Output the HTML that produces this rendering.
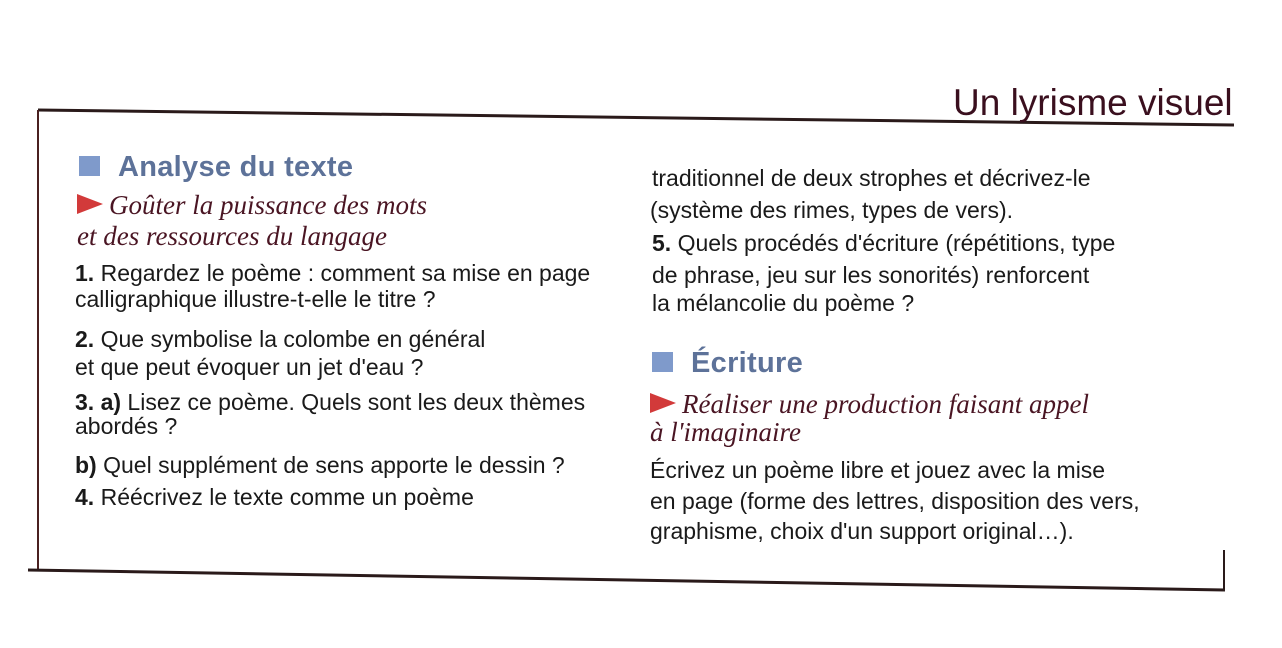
<!DOCTYPE html>
<html><head><meta charset="utf-8"><style>
body{margin:0;width:1282px;height:648px;background:#fff;position:relative;overflow:hidden;font-family:"Liberation Sans",sans-serif;color:#1a1a1a}
.l{position:absolute;white-space:nowrap;font-size:23px;line-height:26px}
.h{font-size:29px;color:#5d7299;font-weight:bold;letter-spacing:0.3px}
.sq{display:inline-block;width:21px;height:20px;background:#7f9acb;margin-right:18px;vertical-align:0}
.s{font-family:"Liberation Serif",serif;font-style:italic;font-size:27px;color:#4a1523}
.tri{display:inline-block;width:0;height:0;border-left:26px solid #d23a3a;border-top:10px solid transparent;border-bottom:10px solid transparent;margin-right:6px;vertical-align:0}
b{font-weight:bold}
</style></head><body>
<svg width="1282" height="648" style="position:absolute;left:0;top:0">
<path d="M38 110 L1234 125" stroke="#2a1a1a" stroke-width="3" fill="none"/>
<path d="M38 110 L38 570" stroke="#4a2020" stroke-width="2" fill="none"/>
<path d="M28 570 L1225 590" stroke="#2a1a1a" stroke-width="3" fill="none"/>
<path d="M1224 550 L1224 590" stroke="#2a1a1a" stroke-width="2" fill="none"/>
</svg>
<div class="l" style="left:953px;top:82px;font-size:37px;line-height:42px;color:#3a0f1e">Un lyrisme visuel</div>

<div class="l h" style="left:79px;top:151px;line-height:32px"><span class="sq"></span>Analyse du texte</div>
<div class="l s" style="left:77px;top:190px;line-height:30px"><span class="tri"></span>Goûter la puissance des mots</div>
<div class="l s" style="left:77px;top:221px;line-height:30px">et des ressources du langage</div>
<div class="l" style="left:75px;top:260px"><b>1.</b> Regardez le poème : comment sa mise en page</div>
<div class="l" style="left:75px;top:286px">calligraphique illustre-t-elle le titre ?</div>
<div class="l" style="left:75px;top:326px"><b>2.</b> Que symbolise la colombe en général</div>
<div class="l" style="left:75px;top:354px">et que peut évoquer un jet d'eau ?</div>
<div class="l" style="left:75px;top:389px"><b>3. a)</b> Lisez ce poème. Quels sont les deux thèmes</div>
<div class="l" style="left:75px;top:413px">abordés ?</div>
<div class="l" style="left:75px;top:452px"><b>b)</b> Quel supplément de sens apporte le dessin ?</div>
<div class="l" style="left:75px;top:484px"><b>4.</b> Réécrivez le texte comme un poème</div>

<div class="l" style="left:652px;top:165px">traditionnel de deux strophes et décrivez-le</div>
<div class="l" style="left:650px;top:197px">(système des rimes, types de vers).</div>
<div class="l" style="left:652px;top:230px"><b>5.</b> Quels procédés d'écriture (répétitions, type</div>
<div class="l" style="left:652px;top:262px">de phrase, jeu sur les sonorités) renforcent</div>
<div class="l" style="left:652px;top:290px">la mélancolie du poème ?</div>
<div class="l h" style="left:652px;top:347px;line-height:32px"><span class="sq"></span>Écriture</div>
<div class="l s" style="left:650px;top:389px;line-height:30px"><span class="tri"></span>Réaliser une production faisant appel</div>
<div class="l s" style="left:650px;top:417px;line-height:30px">à l'imaginaire</div>
<div class="l" style="left:650px;top:457px">Écrivez un poème libre et jouez avec la mise</div>
<div class="l" style="left:650px;top:488px">en page (forme des lettres, disposition des vers,</div>
<div class="l" style="left:650px;top:518px">graphisme, choix d'un support original…).</div>
</body></html>
